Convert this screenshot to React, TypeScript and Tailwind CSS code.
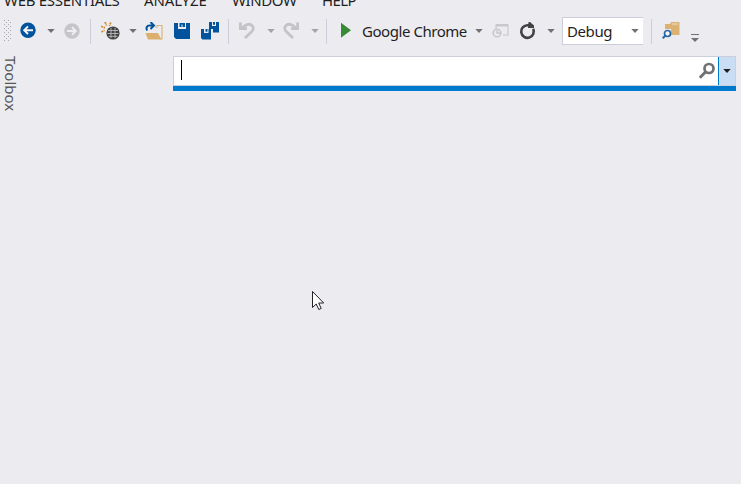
import type { ReactNode } from "react";

function Icon({ className, w = 18, children }: { className: string; w?: number; children: ReactNode }) {
  return (
    <svg className={`block shrink-0 ${className}`} width={w} height={18} viewBox={`0 0 ${w} 18`} fill="none">
      {children}
    </svg>
  );
}

function Caret({ className }: { className: string }) {
  return (
    <svg className={`block h-1 w-[8px] shrink-0 ${className}`} viewBox="0 0 8 4">
      <path d="M.3 0h7.4L4 4z" fill="currentColor" />
    </svg>
  );
}

function Separator({ className }: { className: string }) {
  return <div className={`h-[25px] w-px shrink-0 bg-[#cccedb] ${className}`} />;
}

function MenuBar() {
  return (
    <nav className="flex h-[11px] items-end pl-1 text-[15px] leading-5 whitespace-nowrap">
      <span className="mb-px w-[140px] tracking-[-0.29px]">WEB ESSENTIALS</span>
      <span className="mb-px w-[88px] tracking-[-0.1px]">ANALYZE</span>
      <span className="mb-px w-[90px] tracking-[-0.4px]">WINDOW</span>
      <span className="mb-px tracking-[-0.6px]">HELP</span>
    </nav>
  );
}

function Toolbar() {
  return (
    <div className="flex h-[40px] items-center pl-1">
      <svg className="h-[22px] w-[7px] shrink-0" viewBox="0 0 7 22">
        {[0, 4, 8, 12, 16, 20].map((y) => (
          <g key={y} fill="#a9a9b1">
            <path d={`M0 ${y}h1v1H0zM4 ${y}h1v1H4zM2 ${y + 2}h1v1H2zM6 ${y + 2}h1v1H6z`} />
          </g>
        ))}
      </svg>
      <Icon className="ml-[8px]">
        <circle cx="9" cy="8.2" r="7.7" fill="#00539c" />
        <path d="M14 8.2H5M9 4.4 5.2 8.2 9 12" stroke="#f3f5fa" strokeWidth="2" />
      </Icon>
      <Caret className="ml-[10px] text-[#717171]" />
      <Icon className="ml-[8px]">
        <circle cx="9" cy="9" r="7.7" fill="#c6c6c8" />
        <path d="M4 9h9M9 5.2 12.8 9 9 12.8" stroke="#eeeef2" strokeWidth="2" />
      </Icon>
      <Separator className="ml-[9px]" />
      <Icon className="ml-[10px]" w={19}>
        <path d="M4 0l1.5 3.5M0 4.3l4 1.5M.5 10l3-1.8M9.8 .5 8.4 3.8" stroke="#d18a2e" strokeWidth="1.8" strokeDasharray="2 .7" />
        <circle cx="12" cy="11" r="6.6" fill="#424242" />
        <path d="M7 8.5h10M6.5 11.5h11M7.5 14.3h9M10 5.8v10.4M14 5.8v10.4" stroke="#c9c9cc" strokeWidth=".8" />
      </Icon>
      <Caret className="ml-[9px] text-[#717171]" />
      <Icon className="ml-[8px]">
        <path d="M10 5h2V3.5h5V17h-1.5" stroke="#dcb67a" strokeWidth="1.2" />
        <path d="M.5 11h12.5l3.5 6.5H3z" fill="#dcb06c" />
        <path d="M2.3 8.5C.5 6 2 3.5 4.5 3.5h4M5.5 0 9 3.5 5.5 7" stroke="#00539c" strokeWidth="2" />
      </Icon>
      <Icon className="ml-[10px]">
        <path d="M1 1h4v6h8V1h4v16H3l-2-2z" fill="#00539c" />
        <path d="M6.5 1H12v4H9.5V2.5h-1V5h-2z" fill="#00539c" />
      </Icon>
      <Icon className="ml-[10px]" w={19}>
        <path d="M8 0h3v4h4V0h3v10.5h-6V7H8zM12 0h2v2.8h-2z" fill="#00539c" />
        <path d="M0 7h3v4h4.5V7H10v10.5H1.5L0 16zM4.5 7h2v2.8h-2z" fill="#00539c" />
      </Icon>
      <Separator className="ml-[8px]" />
      <Icon className="ml-[9px] text-[#c4c4c7]">
        <path d="M3 7 7 3.7c6-4 11 2 6.5 6L7 16" stroke="currentColor" strokeWidth="2.8" />
        <path d="M1 .5h2.8v4.7H9V8H1z" fill="currentColor" />
      </Icon>
      <Caret className="ml-[11px] text-[#a2a4a8]" />
      <Icon className="ml-[7px] text-[#c4c4c7]">
        <path d="M15 7 11 3.7C5-.3 0 5.7 4.5 9.7L11 16" stroke="currentColor" strokeWidth="2.8" />
        <path d="M17 .5h-2.8v4.7H9V8h8z" fill="currentColor" />
      </Icon>
      <Caret className="ml-[11px] text-[#a2a4a8]" />
      <Separator className="ml-[7px]" />
      <Icon className="ml-[13px]" w={12}>
        <path d="M1 .7 11 8.2 1 15.7z" fill="#388a34" />
      </Icon>
      <span className="ml-[10px] w-[105px] shrink-0 text-[15px] leading-5 tracking-[-0.45px] whitespace-nowrap">Google Chrome</span>
      <Caret className="ml-[8px] text-[#717171]" />
      <Icon className="ml-[9px] text-[#c8c8cb]">
        <path d="M4 7V3h12v10h-5" stroke="currentColor" strokeWidth="1.2" />
        <path d="M4 2h12v2.5H4z" fill="currentColor" />
        <circle cx="5" cy="11" r="3.8" stroke="currentColor" strokeWidth="1.6" />
        <path d="M5 8.5V11h3" stroke="currentColor" strokeWidth="1.6" />
      </Icon>
      <Icon className="ml-[9px]">
        <path d="M14.2 6.8A6.3 6.3 0 1 1 8.5 3.2H11" stroke="#424242" strokeWidth="2.6" />
        <path d="M9.5 0H11l4 3.5V6H9z" fill="#424242" />
      </Icon>
      <Caret className="ml-[10px] text-[#717171]" />
      <div className="ml-[7px] flex h-[28px] w-[81px] shrink-0 items-center border border-r-0 border-[#cccedb] bg-white pl-1">
        <span className="w-[46px] text-[15px] leading-5 tracking-[-0.4px]">Debug</span>
        <Caret className="ml-[18px] text-[#717171]" />
      </div>
      <Separator className="ml-[8px]" />
      <Icon className="ml-[10px]" w={19}>
        <path d="M3 2h5l1-2h8.5v13H9V7H3z" fill="#dcb274" />
        <path d="M10 2h6" stroke="#eee2cd" />
        <circle cx="5.5" cy="11.5" r="3" fill="#f6f6f6" stroke="#2666a5" strokeWidth="1.7" />
        <path d="M3.5 13.5 .7 16.3" stroke="#2666a5" strokeWidth="2" />
      </Icon>
      <svg className="mt-[14px] ml-[10px] h-2 w-[8px] shrink-0" viewBox="0 0 8 8">
        <path d="M0 0h8v1H0zM0 4h8L4 8z" fill="#717171" />
      </svg>
    </div>
  );
}

function SearchBox() {
  return (
    <div className="mt-[5px] flex h-[35px] w-[563px] border-b-[5px] border-[#007acc]">
      <div className="flex h-[30px] w-full border border-[#cccedb] bg-white">
        <div className="mt-[3px] ml-[7px] h-5 w-px bg-black" />
        <svg className="mt-[5px] mr-[2px] ml-auto h-[18px] w-[18px]" viewBox="0 0 18 18" fill="none">
          <circle cx="11" cy="6.5" r="4.5" stroke="#717171" strokeWidth="2.7" />
          <path d="M7.5 10 1.8 15.7" stroke="#717171" strokeWidth="3" />
        </svg>
        <div className="flex w-[17px] items-center justify-center border-l border-[#007acc] bg-[#c9def5]">
          <Caret className="text-[#1e1e1e]" />
        </div>
      </div>
    </div>
  );
}

export default function App() {
  return (
    <main className="relative h-[484px] w-[741px] overflow-hidden bg-[#ececf0] font-['Noto_Sans','Open_Sans',sans-serif] text-[#1e1e1e]">
      <MenuBar />
      <Toolbar />
      <div className="flex">
        <aside className="w-[173px] pt-[5px] pl-px text-[15px] leading-5 text-[#555]">
          <span className="block h-[56px] w-5 [writing-mode:vertical-rl]">Toolbox</span>
        </aside>
        <SearchBox />
      </div>
      <svg className="absolute top-[290px] left-[311px] h-[22px] w-[14px]" viewBox="0 0 14 22">
        <path d="M1.5 1.5v16l3.7-3.5 2.6 5.5 2.4-1.1L7.7 13h5z" fill="white" stroke="#222" />
      </svg>
    </main>
  );
}
